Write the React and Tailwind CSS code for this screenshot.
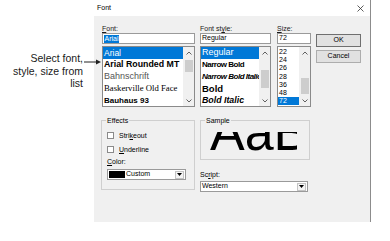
import React from 'react';

function Chevron({ up }) {
    return (
        <svg width="6" height="4" viewBox="0 0 6 4">
            <path d={up ? 'M0.5 3.5L3 1L5.5 3.5' : 'M0.5 0.5L3 3L5.5 0.5'} fill="none" stroke="#606060" strokeWidth="1" />
        </svg>
    );
}

function ScrollBar({ thumb }) {
    return (
        <div className="w-[11px] shrink-0 bg-[#f0f0f0] flex flex-col items-center">
            <div className="h-[11px] flex items-center justify-center"><Chevron up /></div>
            <div className={`w-[8px] bg-[#cdcdcd] ${thumb}`} />
            <div className="mt-auto h-[11px] flex items-center justify-center"><Chevron /></div>
        </div>
    );
}

function DropButton() {
    return (
        <div className="ml-auto mr-[1px] w-[9px] h-[8px] border border-[#c4c4c4] bg-[#f4f4f4] flex items-center justify-center">
            <svg width="5" height="3" viewBox="0 0 5 3"><path d="M0 0H5L2.5 3Z" fill="#000" /></svg>
        </div>
    );
}

function Check({ children }) {
    return (
        <div className="h-[7px] flex items-center gap-[5px]">
            <div className="w-[7px] h-[7px] border border-[#8a8a8a] bg-white" />
            <span className="text-[7px] leading-[7px]">{children}</span>
        </div>
    );
}

function Label({ children }) {
    return <div className="h-[9px] text-[7px] leading-[9px] text-[#1a1a1a] whitespace-nowrap">{children}</div>;
}

export default function App() {
    const sizes = ['22', '24', '26', '28', '36', '48'];

    return (
        <div className="relative w-[390px] h-[241px] bg-white flex overflow-hidden font-['Liberation_Sans',Arial,sans-serif] text-black">
            {/* Annotation */}
            <div className="w-[94px] shrink-0 pt-[52px] pr-[11px] flex flex-col items-end text-[10.5px] leading-[12.5px] text-[#1a1a1a] text-right">
                <span>Select font,</span>
                <span>style, size from</span>
                <span>list</span>
            </div>
            <svg className="absolute left-[84px] top-[59px]" width="18" height="6" viewBox="0 0 18 6">
                <path d="M0 3H13" stroke="#222" strokeWidth="1" />
                <path d="M12 0.5L17 3L12 5.5Z" fill="#222" />
            </svg>

            {/* Dialog */}
            <div className="w-[277px] h-[222px] shrink-0 flex flex-col border-r border-[#8c8c8c]">
                <div className="h-[16px] bg-white flex items-center justify-between pl-[3px] pr-[6px] text-[7px]">
                    <span>Font</span>
                    <svg width="7" height="7" viewBox="0 0 7 7">
                        <path d="M0.5 0.5L6.5 6.5M6.5 0.5L0.5 6.5" stroke="#333" strokeWidth="0.8" />
                    </svg>
                </div>

                <div className="flex-1 bg-[#f0f0f0] pl-[8px] pt-[8px] flex flex-col">
                    {/* Top row */}
                    <div className="flex">
                        {/* Font */}
                        <div className="w-[93px] flex flex-col">
                            <Label><u>F</u>ont:</Label>
                            <div className="h-[11px] border border-[#9a9a9a] bg-white flex items-center pl-[1px]">
                                <span className="bg-[#0078d7] text-white text-[7px] leading-[8px] px-[0.5px]">Arial</span>
                            </div>
                            <div className="mt-[2px] h-[61px] border border-[#8a8a8a] bg-white flex">
                                <div className="flex-1 min-w-0 overflow-hidden">
                                    <div className="h-[12px] flex items-center pl-[1px] bg-[#0078d7] text-white text-[8.5px] whitespace-nowrap">Arial</div>
                                    <div className="h-[12px] flex items-center pl-[1px] text-[8.8px] font-bold whitespace-nowrap">Arial Rounded MT</div>
                                    <div className="h-[12px] flex items-center pl-[1px] text-[9px] text-[#555] whitespace-nowrap">Bahnschrift</div>
                                    <div className="h-[12px] flex items-center pl-[1px] text-[8.7px] font-['Liberation_Serif',serif] whitespace-nowrap">Baskerville Old Face</div>
                                    <div className="h-[12px] flex items-center pl-[1px] text-[8px] font-black whitespace-nowrap">Bauhaus 93</div>
                                </div>
                                <ScrollBar thumb="mt-[2px] h-[12px]" />
                            </div>
                        </div>

                        {/* Font style */}
                        <div className="ml-[5px] w-[71px] flex flex-col">
                            <Label>Font st<u>y</u>le:</Label>
                            <div className="h-[11px] border border-[#9a9a9a] bg-white flex items-center pl-[1px] text-[7px]">Regular</div>
                            <div className="mt-[2px] h-[61px] border border-[#8a8a8a] bg-white flex">
                                <div className="flex-1 min-w-0 overflow-hidden">
                                    <div className="h-[12px] flex items-center pl-[1px] bg-[#0078d7] text-white text-[9px] whitespace-nowrap">Regular</div>
                                    <div className="h-[12px] flex items-center pl-[1px] text-[8px] font-bold tracking-[-0.5px] whitespace-nowrap">Narrow Bold</div>
                                    <div className="h-[12px] flex items-center pl-[1px] text-[8px] font-bold italic tracking-[-0.5px] whitespace-nowrap">Narrow Bold Italic</div>
                                    <div className="h-[12px] flex items-center pl-[1px] text-[9.5px] font-bold whitespace-nowrap">Bold</div>
                                    <div className="h-[12px] flex items-center pl-[1px] text-[8.8px] font-bold italic whitespace-nowrap">Bold Italic</div>
                                </div>
                                <ScrollBar thumb="mt-[12px] h-[18px]" />
                            </div>
                        </div>

                        {/* Size */}
                        <div className="ml-[6px] w-[34px] flex flex-col">
                            <Label><u>S</u>ize:</Label>
                            <div className="h-[11px] border border-[#9a9a9a] bg-white flex items-center pl-[1px] text-[7px]">72</div>
                            <div className="mt-[2px] h-[61px] border border-[#8a8a8a] bg-white flex">
                                <div className="flex-1 min-w-0 pt-[1px] overflow-hidden text-[7px]">
                                    {sizes.map((s) => (
                                        <div key={s} className="h-[8.2px] leading-[8.2px] pl-[1px]">{s}</div>
                                    ))}
                                    <div className="h-[8.2px] leading-[8.2px] pl-[1px] bg-[#0078d7] text-white">72</div>
                                </div>
                                <ScrollBar thumb="mt-[20px] h-[16px]" />
                            </div>
                        </div>

                        {/* Buttons */}
                        <div className="ml-[5px] w-[45px] pt-[10px] flex flex-col gap-[3px] text-[7px]">
                            <div className="h-[13px] border border-[#6f6f6f] bg-[#e1e1e1] flex items-center justify-center">OK</div>
                            <div className="h-[13px] border border-[#adadad] bg-[#e1e1e1] flex items-center justify-center">Cancel</div>
                        </div>
                    </div>

                    {/* Bottom row */}
                    <div className="mt-[10px] flex">
                        <fieldset className="ml-[-1px] w-[94px] min-w-0 h-[73px] border border-[#cfcfcf] pl-[5px] flex flex-col">
                            <legend className="ml-[-1px] px-[1px] text-[7px] leading-[7px]">Effects</legend>
                            <div className="mt-[8px]"><Check>Stri<u>k</u>eout</Check></div>
                            <div className="mt-[7px]"><Check><u>U</u>nderline</Check></div>
                            <div className="mt-[4px] h-[7px] text-[7px] leading-[9px]"><u>C</u>olor:</div>
                            <div className="mt-[5px] w-[79px] h-[11px] border border-[#9a9a9a] bg-white flex items-center pl-[1px] text-[7px]">
                                <div className="w-[16px] h-[7px] bg-black" />
                                <span className="ml-[1px]">Custom</span>
                                <DropButton />
                            </div>
                        </fieldset>

                        <div className="ml-[5px] w-[110px] min-w-0 flex flex-col">
                            <fieldset className="w-[110px] min-w-0 h-[43px] border border-[#cfcfcf] pl-[5px] pr-[13px]">
                                <legend className="ml-[-1px] px-[1px] text-[7px] leading-[7px]">Sample</legend>
                                <div className="mt-[8px] w-[91px] h-[25px] overflow-hidden">
                                    <div className="pl-[4px] -mt-[26px] text-[52px] leading-[52px] whitespace-nowrap">AaBbYyZz</div>
                                </div>
                            </fieldset>
                            <div className="mt-[10px] h-[7px] text-[7px] leading-[9px]">Sc<u>r</u>ipt:</div>
                            <div className="mt-[4px] w-[108px] h-[11px] border border-[#9a9a9a] bg-white flex items-center pl-[1px] text-[7px]">
                                <span>Western</span>
                                <DropButton />
                            </div>
                        </div>
                    </div>
                </div>
            </div>
        </div>
    );
}
